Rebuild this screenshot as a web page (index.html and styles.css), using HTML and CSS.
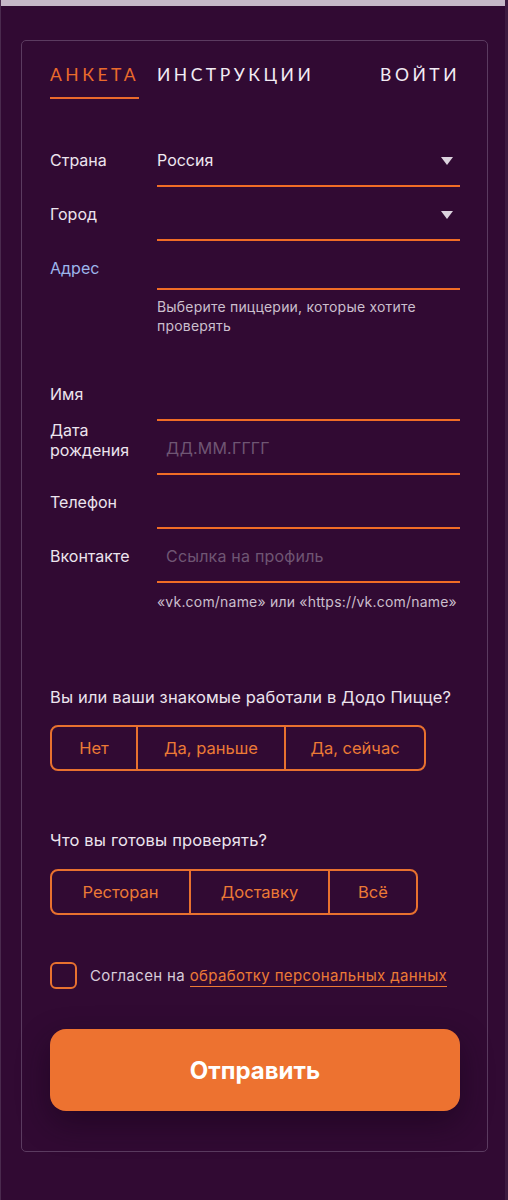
FILE: index.html
```html
<!DOCTYPE html>
<html lang="ru">
<head>
<meta charset="utf-8">
<title>Анкета</title>
<link rel="stylesheet" href="styles.css">
</head>
<body>
<div class="topbar"></div>
<main class="page">
  <section class="card">
    <nav class="tabs">
      <a class="tab active">АНКЕТА</a>
      <a class="tab">ИНСТРУКЦИИ</a>
      <a class="tab login">ВОЙТИ</a>
    </nav>

    <form class="form">
      <div class="group">
        <div class="row">
          <label class="label">Страна</label>
          <div class="field select"><span class="value">Россия</span><span class="caret"></span></div>
        </div>
        <div class="row">
          <label class="label">Город</label>
          <div class="field select"><span class="value"></span><span class="caret"></span></div>
        </div>
        <div class="row">
          <label class="label label-blue">Адрес</label>
          <div class="field field-short"></div>
        </div>
        <div class="row">
          <span></span>
          <p class="hint">Выберите пиццерии, которые хотите проверять</p>
        </div>
      </div>

      <div class="group group-personal">
        <div class="row">
          <label class="label">Имя</label>
          <div class="field"></div>
        </div>
        <div class="row">
          <label class="label label-two">Дата<br>рождения</label>
          <div class="field"><span class="placeholder">ДД.ММ.ГГГГ</span></div>
        </div>
        <div class="row">
          <label class="label">Телефон</label>
          <div class="field"></div>
        </div>
        <div class="row">
          <label class="label">Вконтакте</label>
          <div class="field"><span class="placeholder">Ссылка на профиль</span></div>
        </div>
        <div class="row">
          <span></span>
          <p class="hint hint-vk">«vk.com/name» или «https://vk.com/name»</p>
        </div>
      </div>

      <div class="question q1">
        <p class="q-title">Вы или ваши знакомые работали в Додо Пицце?</p>
        <div class="segments seg1">
          <button type="button" class="seg s-net">Нет</button>
          <button type="button" class="seg s-ran">Да, раньше</button>
          <button type="button" class="seg s-sey">Да, сейчас</button>
        </div>
      </div>

      <div class="question q2">
        <p class="q-title">Что вы готовы проверять?</p>
        <div class="segments seg2">
          <button type="button" class="seg s-rest">Ресторан</button>
          <button type="button" class="seg s-dost">Доставку</button>
          <button type="button" class="seg s-all">Всё</button>
        </div>
      </div>

      <div class="agree">
        <span class="checkbox"></span>
        <span class="agree-text">Согласен на <a class="agree-link">обработку персональных данных</a></span>
      </div>

      <button type="button" class="submit">Отправить</button>
    </form>
  </section>
</main>
</body>
</html>
```

FILE: styles.css
```css
* { box-sizing: border-box; }

html, body {
  margin: 0;
  padding: 0;
  background: #310a33;
}

body {
  font-family: Inter, "Noto Sans", sans-serif;
  color: #ece4ee;
  width: 508px;
  min-height: 1200px;
  border-left: 1px solid #4a2a4e;
  border-right: 3px solid #3d1a40;
}

.topbar {
  height: 6px;
  background: #c6b8c8;
  margin-left: -1px;
  margin-right: -3px;
}

.page {
  padding: 34px 17px 0 20px;
}

.card {
  border: 1px solid #5b3b60;
  border-radius: 5px;
  padding: 22px 27px 40px 28px;
  height: 1112px;
}

/* Tabs */
.tabs {
  display: flex;
  align-items: flex-start;
  font-family: Lato, "Open Sans", sans-serif;
  font-size: 17.5px;
  letter-spacing: 3.5px;
}

.tab {
  line-height: 24px;
  padding-bottom: 10px;
  border-bottom: 2px solid transparent;
  color: #f2ecf4;
  margin-right: 18px;
}

.tab.active {
  color: #ea6a2c;
  border-bottom-color: #ea6a2c;
}

.tab.login {
  margin-left: auto;
  margin-right: 0;
}

/* Form */
.form {
  margin-top: 46px;
}

.group {
  display: flex;
  flex-direction: column;
  gap: 12px;
}

.group-personal {
  margin-top: 44px;
}

.row {
  display: grid;
  grid-template-columns: 107px 1fr;
  align-items: start;
}

.label {
  font-size: 16px;
  line-height: 24px;
  padding-top: 3px;
  color: #ece4ee;
}

.label-blue { color: #9db6ec; }

.label-two {
  line-height: 20px;
  padding-top: 0;
  margin-top: -13px;
}

.field {
  height: 42px;
  border-bottom: 2px solid #f06d26;
  padding-top: 3px;
  font-size: 16px;
  line-height: 24px;
  display: flex;
  align-items: flex-start;
  justify-content: space-between;
}

.field-short { height: 37px; }

.value { color: #efe8f1; }

.placeholder {
  color: #6f5673;
  padding-left: 9px;
  letter-spacing: 0.2px;
}

.caret {
  width: 0;
  height: 0;
  margin-top: 9px;
  margin-right: 7px;
  border-left: 6.5px solid transparent;
  border-right: 6.5px solid transparent;
  border-top: 8px solid #dcd3de;
}

.hint {
  margin: -5px 0 0;
  font-size: 14px;
  line-height: 19px;
  color: #cbbfcd;
  letter-spacing: 0.2px;
}

.hint-vk { margin-top: -3px; }

/* Questions */
.question { display: flex; flex-direction: column; align-items: flex-start; }

.q1 { margin-top: 74px; }
.q2 { margin-top: 57px; }

.q-title {
  margin: 0;
  font-size: 16.5px;
  line-height: 24px;
  color: #ece4ee;
  letter-spacing: 0.15px;
}

.segments {
  margin-top: 16px;
  display: flex;
  height: 46px;
  border: 2px solid #e8712f;
  border-radius: 8px;
  overflow: hidden;
}

.seg2 { margin-top: 17px; }

.seg {
  background: transparent;
  border: 0;
  border-left: 2px solid #e8712f;
  font-family: Inter, "Noto Sans", sans-serif;
  font-size: 16.5px;
  color: #ec7a36;
  padding: 0;
  text-align: center;
}

.seg:first-child { border-left: 0; }

.s-net { width: 84px; }
.s-ran { width: 148px; }
.s-sey { width: 140px; }
.s-rest { width: 137px; }
.s-dost { width: 139px; }
.s-all { width: 88px; }

/* Agree */
.agree {
  margin-top: 47px;
  display: flex;
  align-items: center;
  gap: 13px;
}

.checkbox {
  width: 27px;
  height: 27px;
  border: 2px solid #e8712f;
  border-radius: 6px;
  flex: none;
}

.agree-text {
  font-size: 15px;
  line-height: 22px;
  color: #d7ccd9;
  letter-spacing: 0.35px;
}

.agree-link {
  color: #ec7a36;
  border-bottom: 1px solid #ec7a36;
  padding-bottom: 1px;
}

/* Submit */
.submit {
  display: block;
  margin-top: 40px;
  width: 100%;
  height: 82px;
  border: 0;
  border-radius: 16px;
  background: #ed7230;
  color: #ffffff;
  font-family: Inter, "Noto Sans", sans-serif;
  font-weight: 700;
  font-size: 24px;
  box-shadow: 0 12px 32px rgba(18, 0, 20, 0.45);
}
```
